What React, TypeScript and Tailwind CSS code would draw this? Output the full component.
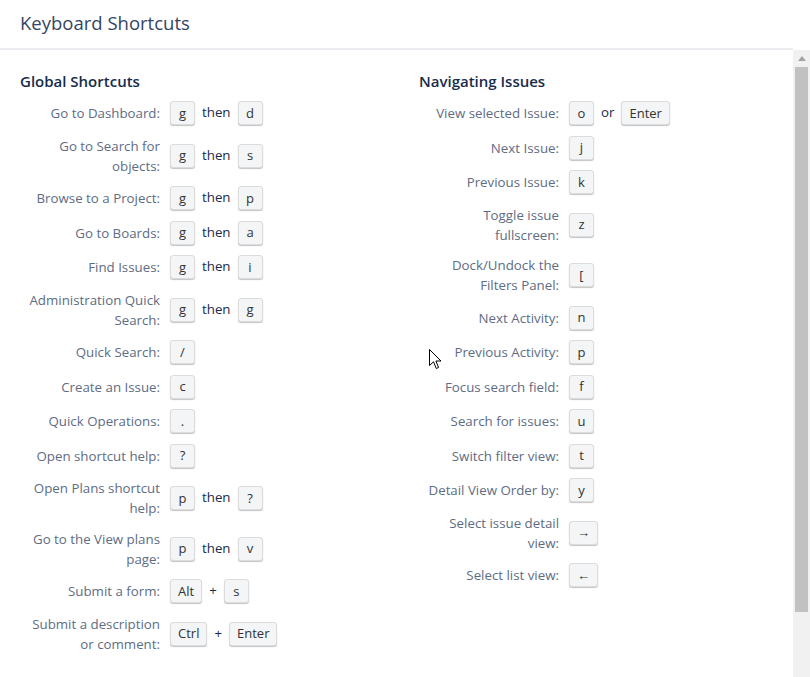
type Shortcut = {
  label: string;
  keys: string[];
  joiner?: string;
};

const globalShortcuts: Shortcut[] = [
  { label: 'Go to Dashboard:', keys: ['g', 'd'], joiner: 'then' },
  { label: 'Go to Search for objects:', keys: ['g', 's'], joiner: 'then' },
  { label: 'Browse to a Project:', keys: ['g', 'p'], joiner: 'then' },
  { label: 'Go to Boards:', keys: ['g', 'a'], joiner: 'then' },
  { label: 'Find Issues:', keys: ['g', 'i'], joiner: 'then' },
  { label: 'Administration Quick Search:', keys: ['g', 'g'], joiner: 'then' },
  { label: 'Quick Search:', keys: ['/'] },
  { label: 'Create an Issue:', keys: ['c'] },
  { label: 'Quick Operations:', keys: ['.'] },
  { label: 'Open shortcut help:', keys: ['?'] },
  { label: 'Open Plans shortcut help:', keys: ['p', '?'], joiner: 'then' },
  { label: 'Go to the View plans page:', keys: ['p', 'v'], joiner: 'then' },
  { label: 'Submit a form:', keys: ['Alt', 's'], joiner: '+' },
  { label: 'Submit a description or comment:', keys: ['Ctrl', 'Enter'], joiner: '+' },
];

const navShortcuts: Shortcut[] = [
  { label: 'View selected Issue:', keys: ['o', 'Enter'], joiner: 'or' },
  { label: 'Next Issue:', keys: ['j'] },
  { label: 'Previous Issue:', keys: ['k'] },
  { label: 'Toggle issue fullscreen:', keys: ['z'] },
  { label: 'Dock/Undock the Filters Panel:', keys: ['['] },
  { label: 'Next Activity:', keys: ['n'] },
  { label: 'Previous Activity:', keys: ['p'] },
  { label: 'Focus search field:', keys: ['f'] },
  { label: 'Search for issues:', keys: ['u'] },
  { label: 'Switch filter view:', keys: ['t'] },
  { label: 'Detail View Order by:', keys: ['y'] },
  { label: 'Select issue detail view:', keys: ['→'] },
  { label: 'Select list view:', keys: ['←'] },
];

const Key = ({ k }: { k: string }) => (
  <kbd className="inline-flex h-[24px] min-w-[25px] items-center justify-center rounded-[3px] border border-[#dcdcdc] bg-[#f4f5f7] px-[7px] font-[inherit] text-[13px] text-[#333] shadow-[0_1px_1px_#c4c4c4]">
    {k}
  </kbd>
);

const Row = ({ item }: { item: Shortcut }) => (
  <div className="flex items-center py-[5.25px]">
    <div className="w-[140px] shrink-0 text-right leading-5 text-[#5e6c84]">{item.label}</div>
    <div className="ml-[10px] flex items-center gap-[7px]">
      {item.keys.map((k, i) => (
        <div key={i} className="flex items-center gap-[7px]">
          {i > 0 && <span className="text-[#172b4d]">{item.joiner}</span>}
          <Key k={k} />
        </div>
      ))}
    </div>
  </div>
);

const Section = ({ title, items }: { title: string; items: Shortcut[] }) => (
  <div>
    <h3 className="mb-[5px] text-[15px] font-semibold leading-5 text-[#172b4d]">{title}</h3>
    {items.map((item) => (
      <Row key={item.label} item={item} />
    ))}
  </div>
);

export default function App() {
  return (
    <div
      className="relative flex h-[677px] w-[810px] flex-col overflow-hidden bg-white text-[13.3px]"
      style={{ fontFamily: '"Segoe UI", "Open Sans", "Noto Sans", sans-serif' }}
    >
      {/* Header */}
      <div className="mr-[17px] flex h-[50px] shrink-0 items-center border-b-2 border-[#ebecf0] px-5 pb-[3px]">
        <h2 className="text-[18.5px] font-normal text-[#344563]">Keyboard Shortcuts</h2>
      </div>

      <div className="flex min-h-0 flex-1">
        {/* Body */}
        <div className="grid flex-1 grid-cols-[399px_1fr] pl-5 pt-[21px]">
          <Section title="Global Shortcuts" items={globalShortcuts} />
          <Section title="Navigating Issues" items={navShortcuts} />
        </div>

        {/* Scrollbar */}
        <div className="flex w-[17px] shrink-0 flex-col bg-[#f1f1f1]">
          <div className="flex h-[17px] items-center justify-center">
            <svg width="8" height="5" viewBox="0 0 8 5">
              <path d="M4 0L8 5H0z" fill="#a3a3a3" />
            </svg>
          </div>
          <div className="mx-[2px] h-[545px] bg-[#c1c1c1]" />
        </div>
      </div>

      {/* Mouse cursor */}
      <svg className="absolute left-[429px] top-[349px]" width="13" height="21" viewBox="0 0 13 21">
        <path d="M0.5 0.5V16.5L4.5 12.8L7.3 19.5L9.6 18.5L6.9 12H12z" fill="#fff" stroke="#000" strokeWidth="1" strokeLinejoin="round" />
      </svg>
    </div>
  );
}
